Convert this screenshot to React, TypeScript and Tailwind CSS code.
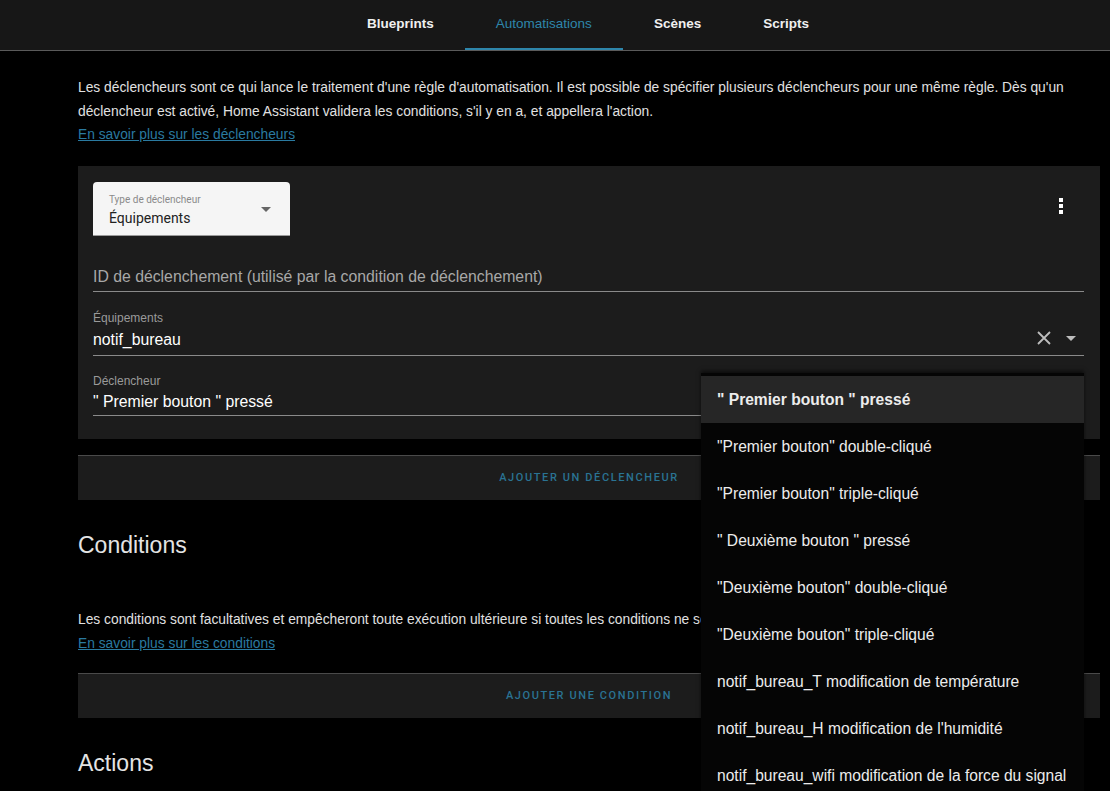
import React from 'react'

const tabs = ['Blueprints', 'Automatisations', 'Scènes', 'Scripts']

const options = [
  '" Premier bouton " pressé',
  '"Premier bouton" double-cliqué',
  '"Premier bouton" triple-cliqué',
  '" Deuxième bouton " pressé',
  '"Deuxième bouton" double-cliqué',
  '"Deuxième bouton" triple-cliqué',
  'notif_bureau_T modification de température',
  "notif_bureau_H modification de l'humidité",
  'notif_bureau_wifi modification de la force du signal',
]

const sans = "font-['Liberation_Sans',Arial,sans-serif]"

function Caret({ className = '' }: { className?: string }) {
  return (
    <svg width="10" height="5" viewBox="0 0 10 5" className={className}>
      <path d="M0 0 L10 0 L5 5 Z" fill="currentColor" />
    </svg>
  )
}

function AddButton({ label }: { label: string }) {
  return (
    <div className="h-[45px] bg-[#1c1c1c] border-t border-[#4a4a4a] flex items-center justify-center">
      <span className="font-['Roboto',sans-serif] text-[11px] font-medium tracking-[1.6px] text-[#2a7393]">
        {label}
      </span>
    </div>
  )
}

export default function App() {
  return (
    <div className={`relative w-[1110px] h-[791px] overflow-hidden bg-black text-[#e1e1e1] ${sans}`}>
      {/* onglets */}
      <div className="h-[51px] bg-[#171717] border-b border-[#5a5a5a] flex justify-center pl-[66px]">
        <div className="flex">
          {tabs.map((t) => {
            const active = t === 'Automatisations'
            return (
              <div
                key={t}
                className={
                  'px-[31px] flex items-center pt-[1px] text-[13.5px] border-b-2 ' +
                  (active ? 'text-[#2e86ab] border-[#2e86ab]' : 'text-[#f0f0f0] border-transparent font-bold')
                }
              >
                {t}
              </div>
            )
          })}
        </div>
      </div>

      <div className="pl-[78px] pr-[10px]">
        {/* déclencheurs */}
        <p className="mt-[25px] text-[13.8px] leading-[24px] pr-[20px] whitespace-nowrap">
          Les déclencheurs sont ce qui lance le traitement d'une règle d'automatisation. Il est possible de spécifier plusieurs déclencheurs pour une même règle. Dès qu'un
          <br />
          déclencheur est activé, Home Assistant validera les conditions, s'il y en a, et appellera l'action.
        </p>
        <a className="block text-[13.8px] leading-[22px] text-[#2a7aa0] underline">En savoir plus sur les déclencheurs</a>

        <div className="mt-[20px] bg-[#1c1c1c] pt-[16px] pb-[23px] pl-[15px] pr-[16px]">
          <div className="flex items-start justify-between">
            <div className="w-[197px] h-[54px] bg-[#f5f5f5] rounded-t-[4px] border-b border-[#9a9a9a] px-[16px] pt-[12px] relative font-['Roboto',sans-serif]">
              <div className="text-[10px] leading-[12px] text-[#8a8a8a]">Type de déclencheur</div>
              <div className="text-[14px] leading-[20px] text-[#222] mt-[2px]">Équipements</div>
              <Caret className="absolute right-[19px] top-[25px] text-[#666]" />
            </div>
            <div className="mt-[16px] mr-[21px] flex flex-col gap-[2px] items-center">
              <span className="w-[4px] h-[4px] bg-white" />
              <span className="w-[4px] h-[4px] bg-white" />
              <span className="w-[4px] h-[4px] bg-white" />
            </div>
          </div>

          <div className="mt-[31px] border-b border-[#8a8a8a] text-[15.8px] leading-[20px] text-[#a8a8a8] pb-[4px]">
            ID de déclenchement (utilisé par la condition de déclenchement)
          </div>

          <div className="mt-[19px] border-b border-[#8a8a8a] pb-[5px] flex items-end">
            <div className="flex-1">
              <div className="text-[12px] leading-[14px] text-[#9a9a9a]">Équipements</div>
              <div className="text-[15.8px] leading-[20px] text-white mt-[5px]">notif_bureau</div>
            </div>
            <svg width="14" height="14" viewBox="0 0 14 14" className="mb-[5px] mr-[15px]">
              <path d="M1 1 L13 13 M13 1 L1 13" stroke="#bdbdbd" strokeWidth="1.8" />
            </svg>
            <Caret className="mb-[9px] mr-[8px] text-[#bdbdbd]" />
          </div>

          <div className="mt-[18px] border-b border-[#8a8a8a] pb-[3px]">
            <div className="text-[12px] leading-[14px] text-[#9a9a9a]">Déclencheur</div>
            <div className="text-[15.8px] leading-[20px] text-white mt-[4px]">" Premier bouton " pressé</div>
          </div>
        </div>

        <div className="mt-[16px]">
          <AddButton label="AJOUTER UN DÉCLENCHEUR" />
        </div>

        {/* conditions */}
        <h2 className="mt-[31px] text-[23px] leading-[28px] text-[#e4e4e4]">Conditions</h2>
        <p className="mt-[49px] text-[13.8px] leading-[24px] whitespace-nowrap">
          Les conditions sont facultatives et empêcheront toute exécution ultérieure si toutes les conditions ne sont pas satisfaites.
        </p>
        <a className="block text-[13.8px] leading-[22px] text-[#2a7aa0] underline mt-[1px]">En savoir plus sur les conditions</a>

        <div className="mt-[18px]">
          <AddButton label="AJOUTER UNE CONDITION" />
        </div>

        {/* actions */}
        <h2 className="mt-[31px] text-[23px] leading-[28px] text-[#e4e4e4]">Actions</h2>
      </div>

      {/* liste déroulante */}
      <div className="absolute left-[701px] top-[373px] w-[383px] bg-[#050505] pt-[3px] shadow-[0_-2px_4px_rgba(0,0,0,0.6)]">
        {options.map((o, i) => (
          <div
            key={o}
            className={
              'h-[47px] flex items-center pl-[16px] text-[15.6px] text-[#ececec] ' +
              (i === 0 ? 'bg-[#262626] font-bold' : '')
            }
          >
            {o}
          </div>
        ))}
      </div>
    </div>
  )
}
